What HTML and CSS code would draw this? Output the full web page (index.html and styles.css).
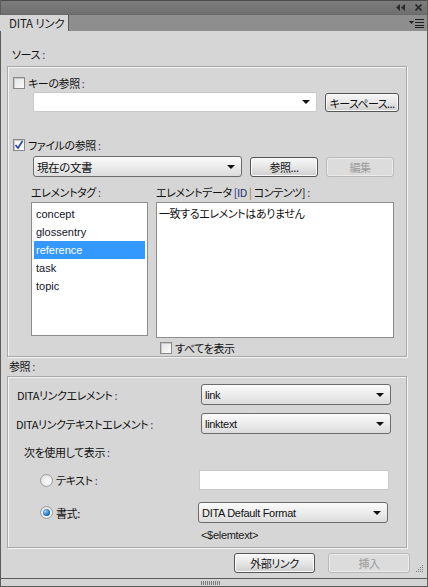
FILE: index.html
```html
<!DOCTYPE html>
<html lang="ja">
<head>
<meta charset="utf-8">
<link rel="stylesheet" href="styles.css">
</head>
<body>
<div class="window">
  <div class="titlebar">
    <svg class="tb-icon collapse" width="9" height="7" viewBox="0 0 9 7"><path d="M4 0 L0 3.5 L4 7 Z M9 0 L5 3.5 L9 7 Z" fill="#2b2b2b"/></svg>
    <svg class="tb-icon close" width="7" height="7" viewBox="0 0 7 7"><path d="M0.5 0.5 L6.5 6.5 M6.5 0.5 L0.5 6.5" stroke="#2b2b2b" stroke-width="1.6"/></svg>
  </div>
  <div class="tabbar">
    <div class="tab">DITA リンク</div>
    <svg class="menu-icon" width="15" height="9" viewBox="0 0 15 9"><path d="M0 2 L5 2 L2.5 5 Z" fill="#1e1e1e"/><path d="M6 0.5 H15 M6 3.5 H15 M6 6.5 H15 M6 8.5 H15" stroke="#1e1e1e" stroke-width="1"/></svg>
  </div>

  <div class="content">
    <div class="sec-label">ソース <span class="colon">:</span></div>
    <div class="box box-source">
      <div class="check-row row-key">
        <span class="checkbox"></span><span class="lbl">キーの参照 <span class="colon">:</span></span>
      </div>
      <div class="ctrl-row row-keycombo">
        <div class="combo combo-white wide"><span class="arrow"></span></div>
        <div class="btn btn-keyspace">キースペース...</div>
      </div>
      <div class="check-row row-file">
        <span class="checkbox checked"><svg width="10" height="10" viewBox="0 0 10 10"><path d="M1.5 5 L4 8 L8.5 1" fill="none" stroke="#2b4fa8" stroke-width="1.8"/></svg></span><span class="lbl">ファイルの参照 <span class="colon">:</span></span>
      </div>
      <div class="ctrl-row row-filecombo">
        <div class="combo combo-grad file"><span class="ctext">現在の文書</span><span class="arrow"></span></div>
        <div class="btn btn-browse">参照...</div>
        <div class="btn btn-edit disabled">編集</div>
      </div>
      <div class="lists">
        <div class="list-col left">
          <div class="list-label">エレメントタグ <span class="colon">:</span></div>
          <div class="listbox tags">
            <div class="item">concept</div>
            <div class="item">glossentry</div>
            <div class="item selected">reference</div>
            <div class="item">task</div>
            <div class="item">topic</div>
          </div>
        </div>
        <div class="list-col right">
          <div class="list-label">エレメントデータ <span class="bracket">[ID</span> <span class="pipe">|</span> コンテンツ] <span class="colon">:</span></div>
          <div class="listbox data">
            <div class="item jp">一致するエレメントはありません</div>
          </div>
          <div class="check-row row-showall">
            <span class="checkbox"></span><span class="lbl">すべてを表示</span>
          </div>
        </div>
      </div>
    </div>

    <div class="sec-label sec-ref">参照 <span class="colon">:</span></div>
    <div class="box box-ref">
      <div class="form-row row1">
        <span class="flabel">DITAリンクエレメント <span class="colon">:</span></span>
        <div class="combo combo-grad sel"><span class="ctext latin">link</span><span class="arrow"></span></div>
      </div>
      <div class="form-row row2">
        <span class="flabel">DITAリンクテキストエレメント <span class="colon">:</span></span>
        <div class="combo combo-grad sel"><span class="ctext latin">linktext</span><span class="arrow"></span></div>
      </div>
      <div class="display-label">次を使用して表示 <span class="colon">:</span></div>
      <div class="form-row row-radio1">
        <span class="radio-wrap"><span class="radio"></span><span class="lbl">テキスト <span class="colon">:</span></span></span>
        <div class="textinput"></div>
      </div>
      <div class="form-row row-radio2">
        <span class="radio-wrap"><span class="radio on"></span><span class="lbl">書式:</span></span>
        <div class="combo combo-grad sel fmt"><span class="ctext latin">DITA Default Format</span><span class="arrow"></span></div>
      </div>
      <div class="elemtext">&lt;$elemtext&gt;</div>
    </div>

    <div class="bottom-buttons">
      <div class="btn btn-ext">外部リンク</div>
      <div class="btn btn-insert disabled">挿入</div>
    </div>
  </div>

  <div class="statusbar">
    <span class="grip"></span>
    <svg class="resize" width="8" height="8" viewBox="0 0 8 8" fill="#7a7a7a">
      <rect x="6" y="0" width="1" height="1"/>
      <rect x="4" y="2" width="1" height="1"/><rect x="6" y="2" width="1" height="1"/>
      <rect x="2" y="4" width="1" height="1"/><rect x="4" y="4" width="1" height="1"/><rect x="6" y="4" width="1" height="1"/>
      <rect x="0" y="6" width="1" height="1"/><rect x="2" y="6" width="1" height="1"/><rect x="4" y="6" width="1" height="1"/><rect x="6" y="6" width="1" height="1"/>
    </svg>
  </div>
</div>
</body>
</html>
```

FILE: styles.css
```css
* { box-sizing: border-box; }
html, body {
  margin: 0;
  padding: 0;
  background: #d6d6d6;
}
body {
  width: 428px;
  height: 587px;
  overflow: hidden;
  font-family: "Noto Sans CJK JP", "Liberation Sans", sans-serif;
  font-size: 11px;
  letter-spacing: -0.4px;
  color: #111;
  font-feature-settings: "palt";
}
.window {
  width: 428px;
  height: 587px;
  display: flex;
  flex-direction: column;
  border-left: 1px solid #5c5c5c;
  border-right: 1px solid #5c5c5c;
  background: #d6d6d6;
  position: relative;
}
.titlebar {
  height: 14px;
  flex: none;
  background: linear-gradient(#7d7d7d, #6f6f6f);
  border-top: 1px solid #4a4a4a;
  display: flex;
  align-items: center;
  justify-content: flex-end;
  gap: 10px;
  padding-right: 5px;
}
.tabbar {
  height: 17px;
  flex: none;
  background: #8e8e8e;
  border-top: 1px solid #6a6a6a;
  display: flex;
  align-items: stretch;
  justify-content: space-between;
}
.tab {
  width: 69px;
  background: #d6d6d6;
  border-right: 1px solid #5a5a5a;
  padding-left: 9px;
  line-height: 16px;
  font-size: 11.5px;
  letter-spacing: -0.2px;
  white-space: nowrap;
  color: #1a1a1a;
  margin-left: -1px;
}
.menu-icon {
  align-self: center;
  margin-right: 3px;
}
.content {
  flex: 1;
  display: flex;
  flex-direction: column;
  padding-left: 6px;
}
.colon { color: #5b3b6b; }
.sec-label {
  margin-top: 16px;
  height: 14px;
  line-height: 14px;
  padding-left: 5px;
}
.sec-ref {
  margin-top: 2px;
  padding-left: 2px;
}
.box {
  width: 400px;
  border: 1px solid #a8a8a8;
  box-shadow: inset 1px 1px 0 #f4f4f4, 1px 1px 0 #f4f4f4;
  display: flex;
  flex-direction: column;
}
.box-source {
  margin-top: 5px;
  height: 291px;
  padding-left: 5px;
}
.check-row {
  display: flex;
  align-items: center;
  height: 12px;
}
.row-key { margin-top: 10px; }
.row-file { margin-top: 27px; }
.checkbox {
  width: 12px;
  height: 12px;
  border: 1px solid #8a8a8a;
  background: linear-gradient(135deg, #e4e4e4, #fafafa);
  box-shadow: inset 1px 1px 0 #c8c8c8;
  display: inline-flex;
  align-items: center;
  justify-content: center;
  flex: none;
}
.checkbox.checked { background: #fafafa; }
.lbl {
  margin-left: 3px;
  line-height: 14px;
  white-space: nowrap;
}
.ctrl-row {
  display: flex;
  align-items: flex-start;
  padding-left: 20px;
  gap: 8px;
}
.row-keycombo { margin-top: 3px; }
.row-filecombo { margin-top: 5px; }
.combo {
  position: relative;
  height: 20px;
  display: flex;
  align-items: center;
  padding-left: 3px;
}
.combo-white {
  background: #fff;
  border: 1px solid #c9c9c9;
  border-radius: 2px;
}
.combo.wide { width: 284px; }
.combo-grad {
  border: 1px solid #6c6c6c;
  border-radius: 3px;
  background: linear-gradient(#fbfbfb, #ececec 50%, #dcdcdc);
}
.combo.file { width: 209px; height: 21px; font-size: 11.5px; }
.arrow {
  position: absolute;
  right: 6px;
  top: 50%;
  margin-top: -2px;
  width: 0;
  height: 0;
  border-left: 4px solid transparent;
  border-right: 4px solid transparent;
  border-top: 4px solid #111;
}
.ctext { line-height: 16px; white-space: nowrap; }
.latin {
  font-family: "Liberation Sans", "Noto Sans CJK JP", sans-serif;
  font-size: 11px;
  letter-spacing: -0.3px;
}
.btn {
  height: 20px;
  border: 1px solid #555;
  border-radius: 3px;
  background: linear-gradient(#f8f8f8, #e6e6e6 50%, #cfcfcf);
  box-shadow: inset 0 0 0 1px #fbfbfb;
  display: flex;
  align-items: center;
  justify-content: center;
  white-space: nowrap;
  color: #111;
}
.btn.disabled {
  border-color: #b9b9b9;
  background: #dcdcdc;
  box-shadow: inset 0 0 0 1px #ececec;
  color: #9c9c9c;
}
.btn-keyspace { width: 74px; margin-top: 1px; height: 19px; letter-spacing: -0.6px; }
.btn-browse { width: 68px; margin-top: 1px; }
.btn-edit { width: 68px; margin-top: 1px; }
.lists {
  display: flex;
  margin-top: 9px;
  padding-left: 18px;
  gap: 8px;
}
.list-col { display: flex; flex-direction: column; }
.list-label {
  height: 13px;
  line-height: 13px;
  white-space: nowrap;
}
.bracket { color: #1e2f78; }
.pipe { color: #b07a1a; }
.listbox {
  margin-top: 3px;
  background: #fff;
  border: 1px solid #8c8c8c;
  padding: 2px;
}
.listbox.tags { width: 117px; height: 134px; }
.listbox.data { width: 238px; height: 136px; }
.item {
  height: 18px;
  line-height: 18px;
  padding-left: 2px;
  font-family: "Liberation Sans", "Noto Sans CJK JP", sans-serif;
  font-size: 11px;
  letter-spacing: 0;
  color: #10142a;
}
.item.selected { background: #3399ff; color: #fff; }
.item.jp {
  font-family: "Noto Sans CJK JP", sans-serif;
  font-size: 11px;
  letter-spacing: -0.4px;
  color: #111;
  padding-left: 0;
  line-height: 14px;
  margin-top: 1px;
}
.row-showall {
  margin-top: 4px;
  padding-left: 4px;
}
.box-ref {
  margin-top: 3px;
  height: 172px;
}
.form-row {
  display: flex;
  align-items: center;
}
.flabel {
  width: 193px;
  padding-left: 9px;
  white-space: nowrap;
}
.row1 { margin-top: 7px; }
.row2 { margin-top: 8px; }
.row2 .flabel { padding-left: 8px; }
.combo.sel { width: 190px; height: 21px; }
.display-label {
  margin-top: 11px;
  padding-left: 16px;
  height: 14px;
  line-height: 14px;
}
.radio-wrap {
  width: 191px;
  padding-left: 32px;
  display: flex;
  align-items: center;
}
.radio {
  width: 13px;
  height: 13px;
  border-radius: 50%;
  border: 1px solid #9c9c9c;
  background: radial-gradient(circle at 60% 60%, #fdfdfd, #dadada);
  flex: none;
  position: relative;
}
.radio.on::after {
  content: "";
  position: absolute;
  left: 2px;
  top: 2px;
  width: 7px;
  height: 7px;
  border-radius: 50%;
  background: radial-gradient(circle at 35% 35%, #9fd4f5, #1f6fb8 60%, #0e3f73);
}
.row-radio1 { margin-top: 11px; }
.textinput {
  width: 190px;
  height: 20px;
  background: #fff;
  border: 1px solid #c9c9c9;
}
.row-radio2 { margin-top: 12px; }
.fmt { width: 190px; margin-left: -1px; height: 21px; }
.elemtext {
  margin-top: 6px;
  padding-left: 193px;
  font-family: "Liberation Sans", sans-serif;
  font-size: 11px;
  letter-spacing: -0.3px;
  color: #1a1a1a;
}
.bottom-buttons {
  display: flex;
  justify-content: flex-end;
  gap: 13px;
  margin-top: 5px;
  padding-right: 17px;
}
.btn-ext { width: 81px; }
.btn-insert { width: 82px; }
.statusbar {
  height: 9px;
  flex: none;
  border-top: 1px solid #5a5a5a;
  background: #d4d4d4;
  border-bottom: 1px solid #5a5a5a;
  display: flex;
  justify-content: center;
  position: relative;
}
.grip {
  width: 19px;
  height: 4px;
  margin-top: 2px;
  margin-left: -8px;
  background: repeating-linear-gradient(90deg, #7a7a7a 0 1px, transparent 1px 2px);
}
.resize {
  position: absolute;
  right: 3px;
  top: -14px;
}
```
